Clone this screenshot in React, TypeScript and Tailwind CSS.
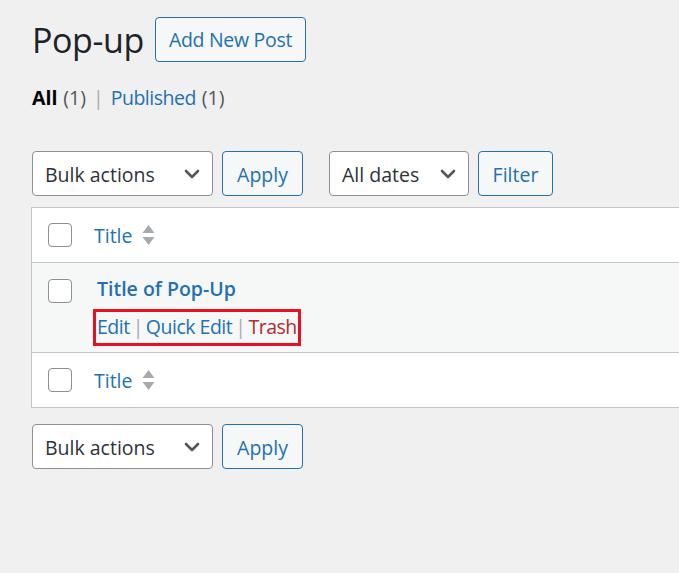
import React from 'react';

const font = { fontFamily: '"Open Sans", "Noto Sans", Arial, sans-serif' };

function Chevron() {
  return (
    <svg width="16" height="10" viewBox="0 0 16 10" className="shrink-0">
      <path d="M2 2l6 6 6-6" fill="none" stroke="#50575e" strokeWidth="2.6" strokeLinecap="round" strokeLinejoin="round" />
    </svg>
  );
}

function SortArrows() {
  return (
    <svg width="13" height="22" viewBox="0 0 13 22" className="ml-[9px]">
      <path d="M6.5 1L12.5 9H0.5z" fill="#a7aaad" />
      <path d="M0.5 13h12l-6 8z" fill="#a7aaad" />
    </svg>
  );
}

function Select({ label, width }: { label: string; width: string }) {
  return (
    <div className={`${width} h-[45px] flex items-center justify-between pl-[12px] pr-[12px] pt-[1px] bg-white border border-[#8c8f94] rounded-[4px] text-[19.5px] text-[#2c3338]`}>
      <span>{label}</span>
      <Chevron />
    </div>
  );
}

function Btn({ label, width }: { label: string; width: string }) {
  return (
    <div className={`${width} h-[45px] flex items-center justify-center pt-[1px] bg-[#f6f7f7] border border-[#2271b1] rounded-[4px] text-[19.5px] text-[#2271b1]`}>
      {label}
    </div>
  );
}

function Checkbox() {
  return <div className="w-[24px] h-[24px] bg-white border border-[#8c8f94] rounded-[4px] shrink-0" />;
}

function TitleHead() {
  return (
    <div className="h-[54px] flex items-center pl-[16px] bg-white">
      <Checkbox />
      <span className="ml-[22px] text-[19.5px] text-[#2271b1]">Title</span>
      <SortArrows />
    </div>
  );
}

export default function App() {
  return (
    <div className="w-[679px] h-[573px] overflow-hidden bg-[#f0f0f1]" style={font}>
      <div className="pl-[31px] pt-[17px]">
        <div className="flex items-center">
          <h1 className="ml-[1px] text-[34px] leading-none text-[#1d2327] font-normal tracking-[-0.4px]">Pop-up</h1>
          <div className="ml-[11px] h-[45px] px-[13px] flex items-center bg-[#f6f7f7] border border-[#2271b1] rounded-[4px] text-[19.5px] text-[#2271b1] tracking-[-0.3px]">
            Add New Post
          </div>
        </div>

        <div className="mt-[21px] ml-[1px] text-[19.5px] text-[#50575e] flex items-center">
          <span className="font-bold text-black">All</span>
          <span className="ml-[6px]">(1)</span>
          <span className="mx-[7px] text-[#a7aaad]">|</span>
          <span className="text-[#2271b1] tracking-[-0.5px]">Published</span>
          <span className="ml-[6px]">(1)</span>
        </div>

        <div className="mt-[39px] ml-[1px] flex items-center">
          <Select label="Bulk actions" width="w-[181px]" />
          <div className="ml-[9px]"><Btn label="Apply" width="w-[81px]" /></div>
          <div className="ml-[26px]"><Select label="All dates" width="w-[140px]" /></div>
          <div className="ml-[9px]"><Btn label="Filter" width="w-[75px]" /></div>
        </div>

        <div className="mt-[11px] w-[700px] border border-[#c3c4c7]">
          <TitleHead />
          <div className="h-[91px] bg-[#f6f7f7] border-t border-b border-[#c3c4c7] flex pl-[16px] pt-[16px]">
            <Checkbox />
            <div className="ml-[25px] -mt-[5px]">
              <div className="text-[19.5px] font-semibold text-[#2271b1]">Title of Pop-Up</div>
              <div className="-ml-[4px] mt-[5px] inline-flex items-center border-[3px] border-[#e81123] px-[1px] h-[37px] text-[19.5px] text-[#2271b1] tracking-[-0.5px]">
                <span>Edit</span>
                <span className="mx-[3px] text-[#a7aaad]">|</span>
                <span>Quick Edit</span>
                <span className="mx-[3px] text-[#a7aaad]">|</span>
                <span className="text-[#b32d2e]">Trash</span>
              </div>
            </div>
          </div>
          <TitleHead />
        </div>

        <div className="mt-[16px] ml-[1px] flex items-center">
          <Select label="Bulk actions" width="w-[181px]" />
          <div className="ml-[9px]"><Btn label="Apply" width="w-[81px]" /></div>
        </div>
      </div>
    </div>
  );
}
